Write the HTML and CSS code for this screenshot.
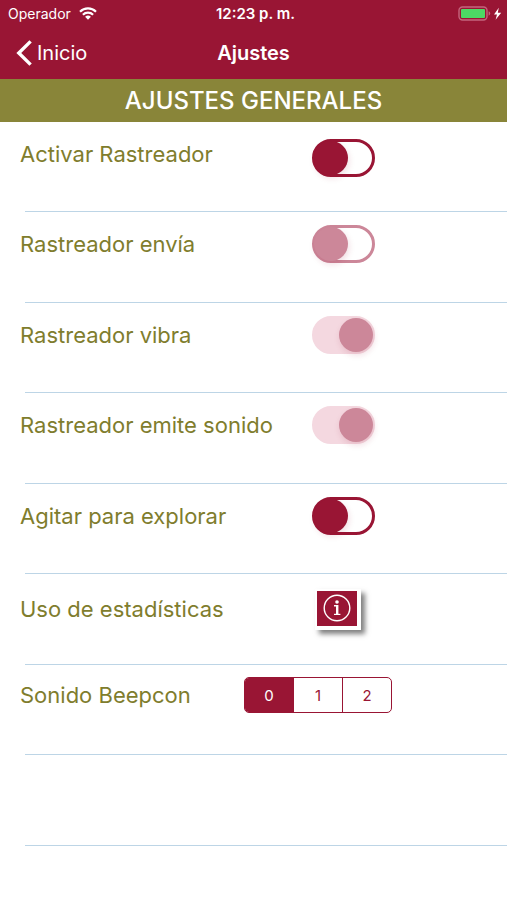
FILE: index.html
```html
<!DOCTYPE html>
<html lang="es">
<head>
    <meta charset="UTF-8">
    <meta name="viewport" content="width=device-width, initial-scale=1.0">
    <title>Ajustes</title>
    <link rel="stylesheet" href="styles.css">
</head>
<body>

    <header class="top">
        <!-- Barra de estado -->
        <div class="status-bar">
            <div class="carrier">
                <span>Operador</span>
                <svg width="18" height="13" viewBox="0 0 18 13" fill="none" stroke="#fff" stroke-width="2.2">
                    <path d="M1 4.7a11.4 11.4 0 0 1 16 0"/>
                    <path d="M3.9 7.8a7.3 7.3 0 0 1 10.2 0"/>
                    <path d="M9 12.8L6.1 9.8a4.2 4.2 0 0 1 5.8 0z" fill="#fff" stroke="none"/>
                </svg>
            </div>
            <span class="time">12:23 p. m.</span>
            <div class="battery">
                <svg width="45" height="16" viewBox="0 0 45 16">
                    <rect x="1" y="1" width="28" height="13" rx="3.5" fill="none" stroke="#c3667d" stroke-width="1.4"/>
                    <rect x="3" y="3" width="24" height="9" rx="1" fill="#4cd964"/>
                    <path d="M30.6 5.3q1.6.6 1.6 2.2t-1.6 2.2z" fill="#c3667d"/>
                    <path d="M40.8 1.8L36 8.6h3l-1.4 5.2L43.2 6.8h-3.4z" fill="#fff"/>
                </svg>
            </div>
        </div>

        <nav class="nav-bar">
            <a class="back" href="#">
                <svg width="16" height="26" viewBox="0 0 16 26" fill="none" stroke="#fff" stroke-width="3.4">
                    <path d="M14.6 1.4L2.8 13l11.8 11.6"/>
                </svg>
                <span>Inicio</span>
            </a>
            <h1 class="title">Ajustes</h1>
        </nav>
    </header>

    <main>
        <h2 class="section-title">AJUSTES GENERALES</h2>

        <ul class="settings">
            <li>
                <div class="row row-first">
                    <label for="rastreador">Activar Rastreador</label>
                    <input class="switch" type="checkbox" id="rastreador">
                </div>
            </li>
            <li>
                <div class="row">
                    <label for="envia">Rastreador envía</label>
                    <input class="switch" type="checkbox" id="envia" disabled>
                </div>
            </li>
            <li>
                <div class="row">
                    <label for="vibra">Rastreador vibra</label>
                    <input class="switch" type="checkbox" id="vibra" checked disabled>
                </div>
            </li>
            <li>
                <div class="row">
                    <label for="sonido">Rastreador emite sonido</label>
                    <input class="switch" type="checkbox" id="sonido" checked disabled>
                </div>
            </li>
            <li>
                <div class="row">
                    <label for="agitar">Agitar para explorar</label>
                    <input class="switch" type="checkbox" id="agitar">
                </div>
            </li>
            <li>
                <div class="row row-info">
                    <label for="estadisticas">Uso de estadísticas</label>
                    <button class="info-button" id="estadisticas" type="button">
                        <svg width="30" height="30" viewBox="0 0 30 30" fill="none" stroke="#fff">
                            <circle cx="15" cy="15" r="12.8" stroke-width="1.4"/>
                            <circle cx="15" cy="9" r="1.8" fill="#fff" stroke="none"/>
                            <path d="M12 12.8h3.2v8.4" stroke-width="1.6"/>
                            <path d="M15.2 12v9" stroke-width="2.4"/>
                            <path d="M12 21.4h6.4" stroke-width="1.2"/>
                        </svg>
                    </button>
                </div>
            </li>
            <li>
                <div class="row row-sound">
                    <span class="row-label" id="beepcon">Sonido Beepcon</span>
                    <div class="segmented" role="radiogroup" aria-labelledby="beepcon">
                        <label><input type="radio" name="beepcon" value="0" checked><span>0</span></label>
                        <label><input type="radio" name="beepcon" value="1"><span>1</span></label>
                        <label><input type="radio" name="beepcon" value="2"><span>2</span></label>
                    </div>
                </div>
            </li>
            <li></li>
        </ul>
    </main>

</body>
</html>
```

FILE: styles.css
```css
* {
    box-sizing: border-box;
}

body {
    margin: 0;
    background-color: #fff;
    font-family: Inter, "Liberation Sans", sans-serif;
}

/* Cabecera */
.top {
    background-color: #991534;
    color: #fff;
}

.status-bar {
    display: grid;
    grid-template-columns: 1fr auto 1fr;
    align-items: center;
    height: 27px;
    padding: 0 4px 0 8px;
    font-size: 14px;
}

.carrier {
    display: flex;
    align-items: center;
    gap: 8px;
}

.time {
    font-size: 15px;
    font-weight: 600;
}

.battery {
    display: flex;
    justify-content: flex-end;
}

.nav-bar {
    display: grid;
    grid-template-columns: 1fr auto 1fr;
    align-items: center;
    height: 52px;
    padding: 0 16px;
}

.back {
    display: flex;
    align-items: center;
    gap: 5px;
    color: #fff;
    font-size: 20px;
    text-decoration: none;
}

.title {
    margin: 0;
    font-size: 20px;
    font-weight: 600;
}

.section-title {
    margin: 0;
    padding-top: 1px;
    background-color: #898539;
    color: #fff;
    font-size: 24px;
    font-weight: 500;
    line-height: 42px;
    text-align: center;
}

/* Lista de ajustes */
.settings {
    margin: 0;
    padding: 0;
    list-style: none;
}

.settings li {
    display: flex;
    flex-direction: column;
    height: 90px;
}

.settings li:nth-child(even) {
    height: 91px;
}

/* Linea separadora */
.settings li::after {
    content: "";
    height: 1px;
    margin: auto 0 0 25px;
    background-color: #bdd5e6;
}

.row {
    display: flex;
    align-items: center;
    height: 64px;
    padding-left: 20px;
    color: #7f7d2d;
    font-size: 22px;
}

.row > label,
.row-label {
    flex: 0 0 292px;
}

.row-first .switch {
    margin-top: 8px;
}

/* Interruptores */
.switch {
    appearance: none;
    display: flex;
    align-items: center;
    width: 63px;
    height: 38px;
    margin: 0;
    border: 3px solid #991534;
    border-radius: 19px;
    cursor: pointer;
}

.switch::before {
    content: "";
    flex: none;
    width: 34px;
    height: 34px;
    margin: 0 -1px;
    border-radius: 50%;
    background-color: #991534;
    box-shadow: 1px 3px 6px rgba(153, 21, 52, 0.15);
}

.switch:disabled {
    border-color: #cc8799;
    cursor: default;
}

.switch:disabled::before {
    background-color: #cc8799;
}

.switch:checked {
    justify-content: flex-end;
    border-color: #f4d8e0;
    background-color: #f4d8e0;
}

/* Boton de informacion */
.row-info {
    height: 70px;
}

.info-button {
    display: flex;
    align-items: center;
    justify-content: center;
    width: 46px;
    height: 41px;
    margin-left: 3px;
    padding: 0;
    border: 2px solid #fff;
    border-width: 2px 4px 4px 2px;
    background-color: #991534;
    box-shadow: 4px 4px 5px rgba(0, 0, 0, 0.5);
    cursor: pointer;
}

/* Selector de sonido */
.row-sound {
    height: 60px;
}

.row-sound .row-label {
    flex-basis: 224px;
}

.segmented {
    display: flex;
    width: 148px;
    height: 36px;
    border: 1px solid #991534;
    border-radius: 5px;
    overflow: hidden;
    color: #991534;
    font-size: 15px;
}

.segmented label {
    position: relative;
    flex: 1;
    cursor: pointer;
}

.segmented label + label {
    border-left: 1px solid #991534;
}

.segmented input {
    position: absolute;
    opacity: 0;
}

.segmented span {
    display: flex;
    align-items: center;
    justify-content: center;
    height: 100%;
}

.segmented input:checked + span {
    background-color: #991534;
    color: #fff;
}
```
